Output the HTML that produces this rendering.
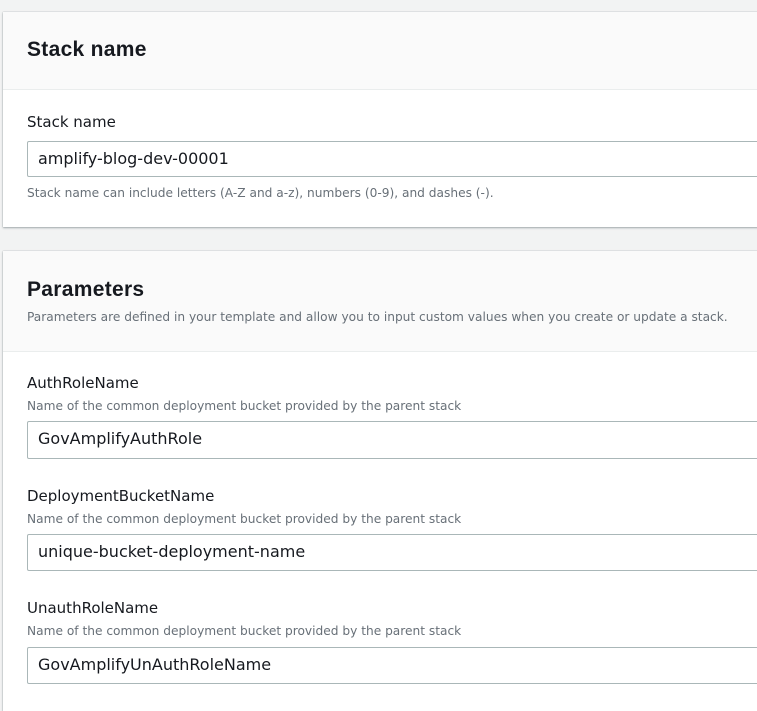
<!DOCTYPE html>
<html><head><style>
body{margin:0;background:#f2f3f3;font-family:"DejaVu Sans","Liberation Sans",sans-serif;color:#16191f;width:757px;height:697px;overflow:hidden;position:relative}
.card{position:absolute;left:3px;width:780px;background:#fff;box-shadow:0 1px 2px rgba(0,28,36,.3),0 0 1px rgba(0,28,36,.3)}
.hd{background:#fafafa;border-bottom:1px solid #eaeded;position:absolute;left:0;right:0;top:0}
.abs{position:absolute;white-space:nowrap}
h2{margin:0;font-family:"Liberation Sans",sans-serif;font-size:21px;font-weight:bold;letter-spacing:0.3px}
.lbl{font-size:15px}
.desc{font-size:12.2px;color:#687078}
.inp{position:absolute;left:24px;width:800px;height:36px;border:1px solid #aab7b8;border-radius:2px;box-sizing:border-box;font-size:16px;padding:7px 0 0 10px;background:#fff}
</style></head><body>
<div class="card" style="top:12px;height:215px">
 <div class="hd" style="height:77px"></div>
 <h2 class="abs" style="left:24px;top:26px">Stack name</h2>
 <div class="abs lbl" style="left:24px;top:101px">Stack name</div>
 <div class="inp" style="top:129px">amplify-blog-dev-00001</div>
 <div class="abs desc" style="left:24px;top:174px">Stack name can include letters (A-Z and a-z), numbers (0-9), and dashes (-).</div>
</div>
<div class="card" style="top:251px;height:460px">
 <div class="hd" style="height:100px"></div>
 <h2 class="abs" style="left:24px;top:27px">Parameters</h2>
 <div class="abs desc" style="left:24px;top:59px">Parameters are defined in your template and allow you to input custom values when you create or update a stack.</div>
 <div class="abs lbl" style="left:24px;top:123px">AuthRoleName</div>
 <div class="abs desc" style="left:24px;top:148px">Name of the common deployment bucket provided by the parent stack</div>
 <div class="inp" style="top:170px;height:38px">GovAmplifyAuthRole</div>
 <div class="abs lbl" style="left:24px;top:236px">DeploymentBucketName</div>
 <div class="abs desc" style="left:24px;top:261px">Name of the common deployment bucket provided by the parent stack</div>
 <div class="inp" style="top:283px;height:37px">unique-bucket-deployment-name</div>
 <div class="abs lbl" style="left:24px;top:348px">UnauthRoleName</div>
 <div class="abs desc" style="left:24px;top:373px">Name of the common deployment bucket provided by the parent stack</div>
 <div class="inp" style="top:396px;height:37px">GovAmplifyUnAuthRoleName</div>
</div>
</body></html>
